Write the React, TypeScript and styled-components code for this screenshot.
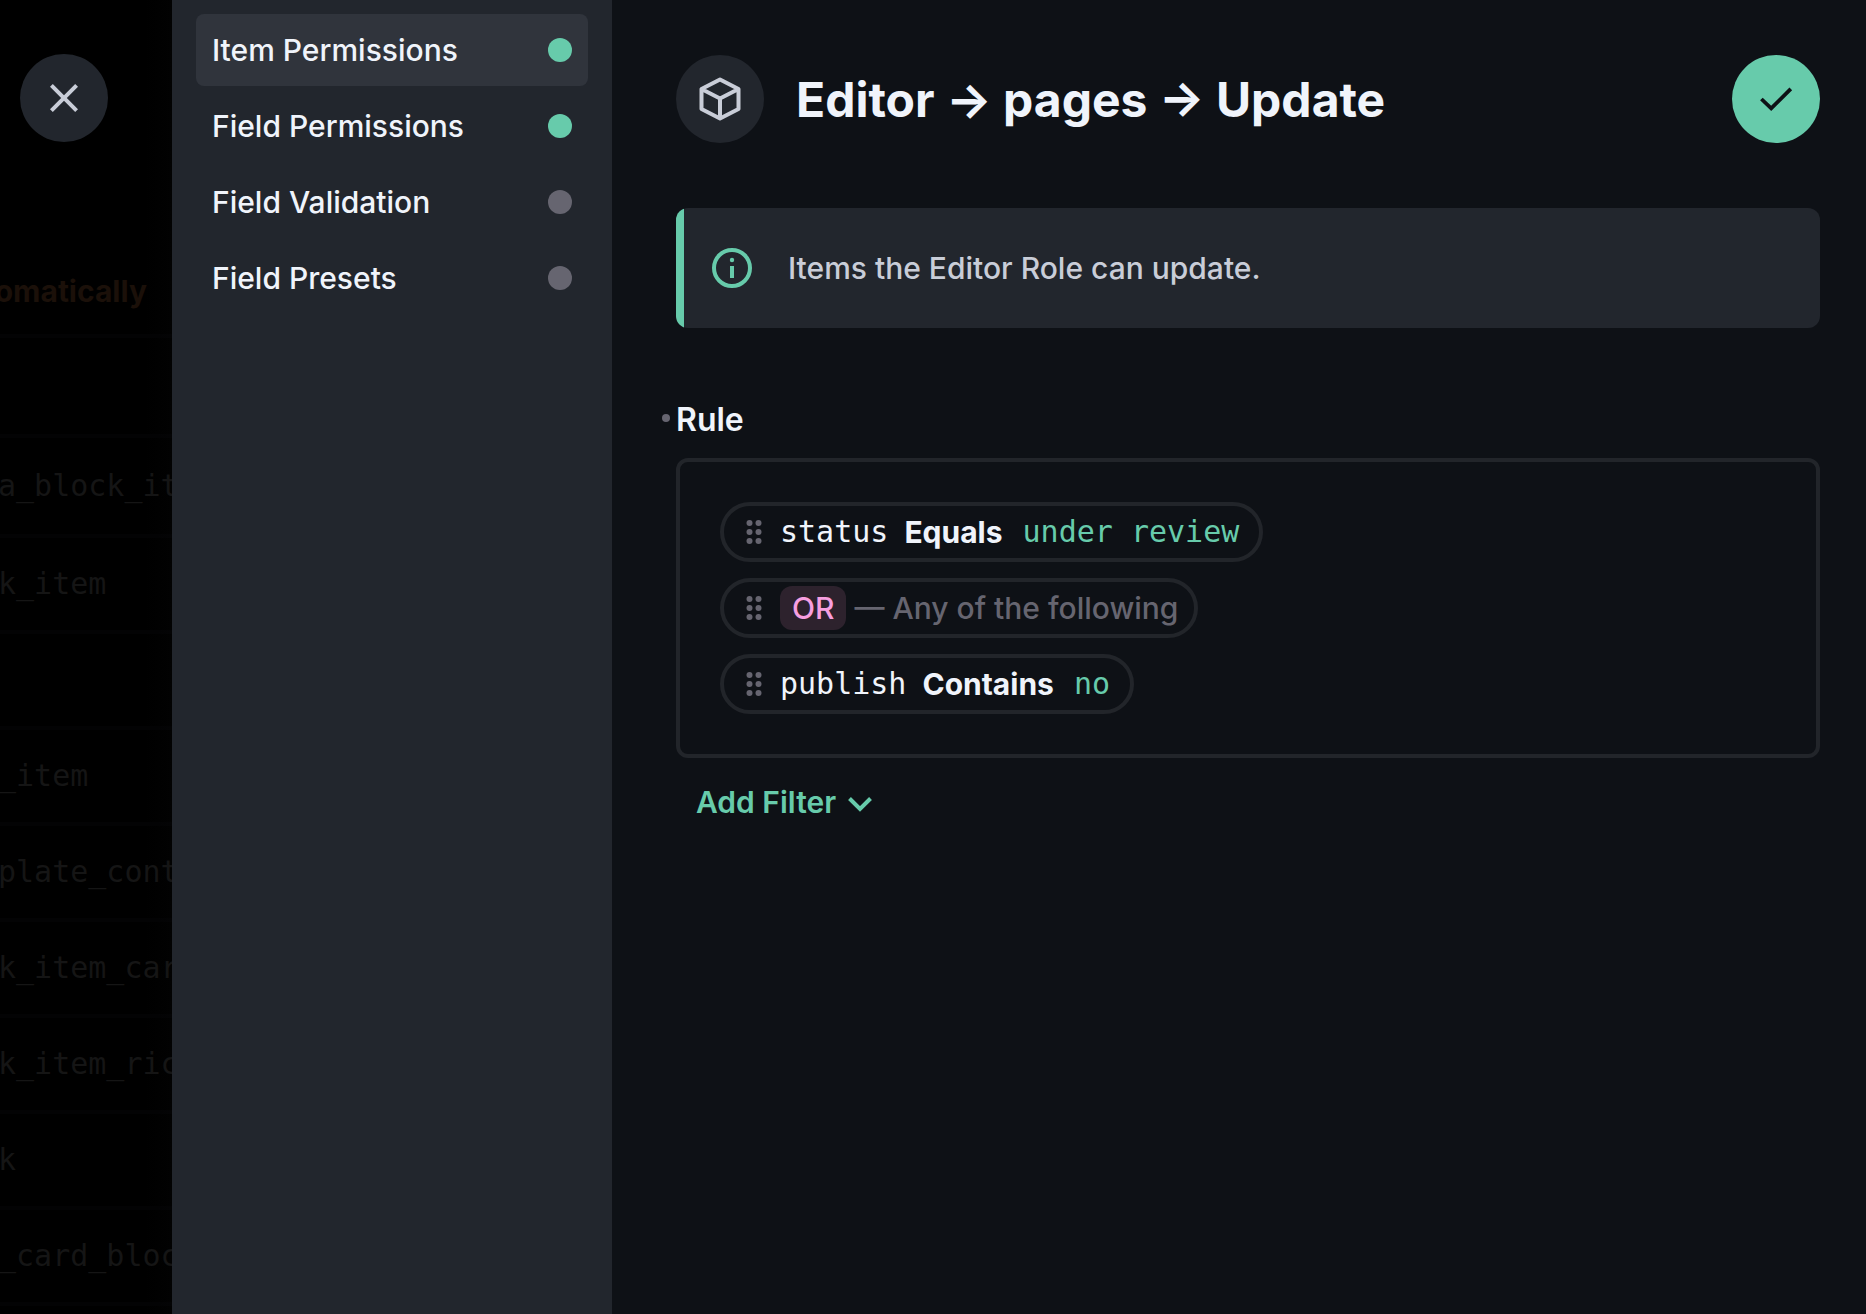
import React from "react";
import styled, { createGlobalStyle, ThemeProvider } from "styled-components";

const theme = {
  page: "#0e1116",
  panel: "#22262d",
  panelActive: "#30343c",
  line: "#22252a",
  primary: "#67cbab",
  text: "#f0f4fb",
  textNormal: "#c9cdd8",
  subdued: "#666570",
  pink: "#f79fe0",
  pinkFill: "#2d222d",
};

const sans = `Inter, "Liberation Sans", sans-serif`;
const mono = `"DejaVu Sans Mono", "Liberation Mono", monospace`;

const GlobalStyle = createGlobalStyle`
  *, *::before, *::after { box-sizing: border-box; }
  body {
    margin: 0;
    background: #000;
    color: ${theme.text};
    font-family: ${sans};
    font-size: 30px;
    line-height: 44px;
    font-weight: 500;
  }
  button { font: inherit; border: 0; margin: 0; padding: 0; cursor: pointer; }
  h1, p, ul { margin: 0; padding: 0; }
  svg { display: block; flex: none; }
`;

const Shell = styled.div`
  display: grid;
  grid-template-columns: 172px 440px minmax(0, 1fr);
  height: 100vh;
  overflow: hidden;
`;

const Backdrop = styled.div`
  position: relative;
  overflow: hidden;
  background: linear-gradient(to right, #000 84%, #020202);
`;

const BackdropNotice = styled.p`
  display: flex;
  align-items: flex-end;
  justify-content: flex-end;
  height: 338px;
  padding: 0 25px 21px 0;
  border-bottom: 4px solid rgba(200, 200, 255, 0.016);
  color: #1b1009;
  font-weight: 700;
`;

const BackdropList = styled.ul`
  list-style: none;
`;

const BackdropRow = styled.li<{ $tall?: boolean }>`
  display: flex;
  align-items: center;
  height: ${(p) => (p.$tall ? 100 : 96)}px;
  border-bottom: 4px solid rgba(200, 200, 255, 0.016);
  color: #151515;
  font-family: ${mono};
  white-space: pre;
  text-indent: -2px;
`;

const RoundButton = styled.button<{ $tone: "panel" | "primary" }>`
  display: flex;
  align-items: center;
  justify-content: center;
  flex: none;
  width: 88px;
  height: 88px;
  border-radius: 50%;
  background: ${(p) => (p.$tone === "primary" ? p.theme.primary : p.theme.panel)};
  color: ${(p) => (p.$tone === "primary" ? p.theme.page : p.theme.textNormal)};
`;

const CloseSlot = styled.div`
  position: absolute;
  top: 54px;
  left: 20px;
`;

const Sidebar = styled.nav`
  display: flex;
  flex-direction: column;
  gap: 4px;
  padding: 14px 24px;
  background: ${(p) => p.theme.panel};
`;

const NavLink = styled.a<{ $active?: boolean }>`
  display: flex;
  align-items: center;
  justify-content: space-between;
  height: 72px;
  padding: 0 16px;
  border-radius: 8px;
  background: ${(p) => (p.$active ? p.theme.panelActive : "transparent")};
  color: ${(p) => p.theme.text};
  text-decoration: none;
`;

const Dot = styled.span<{ $on: boolean }>`
  width: 24px;
  height: 24px;
  border-radius: 50%;
  background: ${(p) => (p.$on ? p.theme.primary : p.theme.subdued)};
`;

const Main = styled.main`
  padding: 55px 46px 0 64px;
  background: ${(p) => p.theme.page};
`;

const Header = styled.header`
  display: flex;
  align-items: center;
  gap: 32px;
`;

const HeaderIcon = styled.span`
  display: flex;
  align-items: center;
  justify-content: center;
  flex: none;
  width: 88px;
  height: 88px;
  border-radius: 50%;
  background: ${(p) => p.theme.panel};
  color: ${(p) => p.theme.textNormal};
`;

const Title = styled.h1`
  flex: 1;
  padding-top: 2px;
  font-size: 48px;
  line-height: 64px;
  font-weight: 700;
`;

const Notice = styled.div`
  display: flex;
  align-items: center;
  height: 120px;
  margin-top: 65px;
  border-radius: 12px;
  overflow: hidden;
  background: ${(p) => p.theme.panel};
  color: ${(p) => p.theme.textNormal};
  &::before {
    content: "";
    align-self: stretch;
    width: 8px;
    background: ${(p) => p.theme.primary};
  }
  svg {
    margin: 0 32px 0 24px;
    color: ${(p) => p.theme.primary};
  }
`;

const FieldLabel = styled.div`
  position: relative;
  margin-top: 70px;
  margin-bottom: 16px;
  font-size: 32px;
  font-weight: 600;
  &::before {
    content: "";
    position: absolute;
    left: -14px;
    top: 16px;
    width: 8px;
    height: 8px;
    border-radius: 50%;
    background: ${(p) => p.theme.subdued};
  }
`;

const RuleBox = styled.ul`
  display: flex;
  flex-direction: column;
  align-items: flex-start;
  gap: 16px;
  && { padding: 40px; }
  border: 4px solid ${(p) => p.theme.line};
  border-radius: 12px;
  list-style: none;
`;

const Pill = styled.li<{ $group?: boolean }>`
  display: flex;
  align-items: center;
  height: 60px;
  padding: 0 ${(p) => (p.$group ? 16 : 20)}px 0 12px;
  border: 4px solid ${(p) => p.theme.line};
  border-radius: 30px;
  white-space: nowrap;
`;

const Grip = styled.span`
  margin-right: 8px;
  color: ${(p) => p.theme.subdued};
`;

const FieldName = styled.span`
  font-family: ${mono};
  font-weight: 400;
`;

const Operator = styled.strong`
  margin: 0 20px 0 16px;
  font-weight: 700;
`;

const Value = styled(FieldName)`
  color: ${(p) => p.theme.primary};
`;

const LogicTag = styled.span`
  padding: 0 12px;
  border-radius: 12px;
  background: ${(p) => p.theme.pinkFill};
  color: ${(p) => p.theme.pink};
`;

const LogicHint = styled.span`
  margin-left: 8px;
  color: ${(p) => p.theme.subdued};
`;

const AddFilter = styled.button`
  display: flex;
  align-items: center;
  gap: 8px;
  margin: 22px 0 0 20px;
  background: none;
  color: ${(p) => p.theme.primary};
  font-weight: 600;
`;

const CloseIcon = () => (
  <svg width="48" height="48" viewBox="0 0 24 24" fill="currentColor" aria-hidden="true">
    <path d="M19 6.41 17.59 5 12 10.59 6.41 5 5 6.41 10.59 12 5 17.59 6.41 19 12 13.41 17.59 19 19 17.59 13.41 12z" />
  </svg>
);

const BoxIcon = () => (
  <svg width="48" height="48" viewBox="0 0 48 48" fill="none" stroke="currentColor" strokeWidth="4" strokeLinejoin="round" aria-hidden="true">
    <path d="M24 4.500 42.500 14V34L24 43.500 5.500 34V14zM5.500 14 24 23.500 42.500 14M24 23.500V43.500" />
  </svg>
);

const CheckIcon = () => (
  <svg width="48" height="48" viewBox="0 0 24 24" fill="none" stroke="currentColor" strokeWidth="1.9" aria-hidden="true">
    <path d="M4.700 12 9.600 16.700 19.400 6.900" />
  </svg>
);

const InfoIcon = () => (
  <svg width="48" height="48" viewBox="0 0 48 48" fill="none" aria-hidden="true">
    <circle cx="24" cy="24" r="18" stroke="currentColor" strokeWidth="4" />
    <circle cx="24" cy="16" r="2.200" fill="currentColor" />
    <rect x="22" y="22" width="4" height="12" fill="currentColor" />
  </svg>
);

const GripIcon = () => (
  <svg width="36" height="36" viewBox="0 0 36 36" fill="currentColor" aria-hidden="true">
    {[13.5, 22.5].map((x) => [9, 18, 27].map((y) => <circle key={`${x}-${y}`} cx={x} cy={y} r="3" />))}
  </svg>
);

const ChevronIcon = () => (
  <svg width="36" height="36" viewBox="0 0 36 36" fill="none" stroke="currentColor" strokeWidth="4" aria-hidden="true">
    <path d="M5.500 14.500 16 25 26.500 14.500" />
  </svg>
);

const sections = [
  { label: "Item Permissions", on: true },
  { label: "Field Permissions", on: true },
  { label: "Field Validation", on: false },
  { label: "Field Presets", on: false },
];

const collections = [
  "",
  "a_block_item",
  "k_item",
  "",
  "_item",
  "plate_content",
  "k_item_card",
  "k_item_rich",
  "k",
  "_card_block",
];

export default function App() {
  return (
    <ThemeProvider theme={theme}>
      <GlobalStyle />
      <Shell>
        <Backdrop>
          <BackdropNotice>omatically</BackdropNotice>
          <BackdropList>
            {collections.map((name, i) => (
              <BackdropRow key={i} $tall={i < 2}>{name}</BackdropRow>
            ))}
          </BackdropList>
          <CloseSlot>
            <RoundButton $tone="panel" aria-label="Close"><CloseIcon /></RoundButton>
          </CloseSlot>
        </Backdrop>
        <Sidebar>
          {sections.map((s, i) => (
            <NavLink key={s.label} href="#" $active={i === 0}>
              {s.label}
              <Dot $on={s.on} />
            </NavLink>
          ))}
        </Sidebar>
        <Main>
          <Header>
            <HeaderIcon><BoxIcon /></HeaderIcon>
            <Title>Editor → pages → Update</Title>
            <RoundButton $tone="primary" aria-label="Save"><CheckIcon /></RoundButton>
          </Header>
          <Notice>
            <InfoIcon />
            <p>Items the Editor Role can update.</p>
          </Notice>
          <FieldLabel id="rule-label">Rule</FieldLabel>
          <RuleBox aria-labelledby="rule-label">
            <Pill>
              <Grip><GripIcon /></Grip>
              <FieldName>status</FieldName>
              <Operator>Equals</Operator>
              <Value>under review</Value>
            </Pill>
            <Pill $group>
              <Grip><GripIcon /></Grip>
              <LogicTag>OR</LogicTag>
              <LogicHint>— Any of the following</LogicHint>
            </Pill>
            <Pill>
              <Grip><GripIcon /></Grip>
              <FieldName>publish</FieldName>
              <Operator>Contains</Operator>
              <Value>no</Value>
            </Pill>
          </RuleBox>
          <AddFilter>
            Add Filter
            <ChevronIcon />
          </AddFilter>
        </Main>
      </Shell>
    </ThemeProvider>
  );
}
